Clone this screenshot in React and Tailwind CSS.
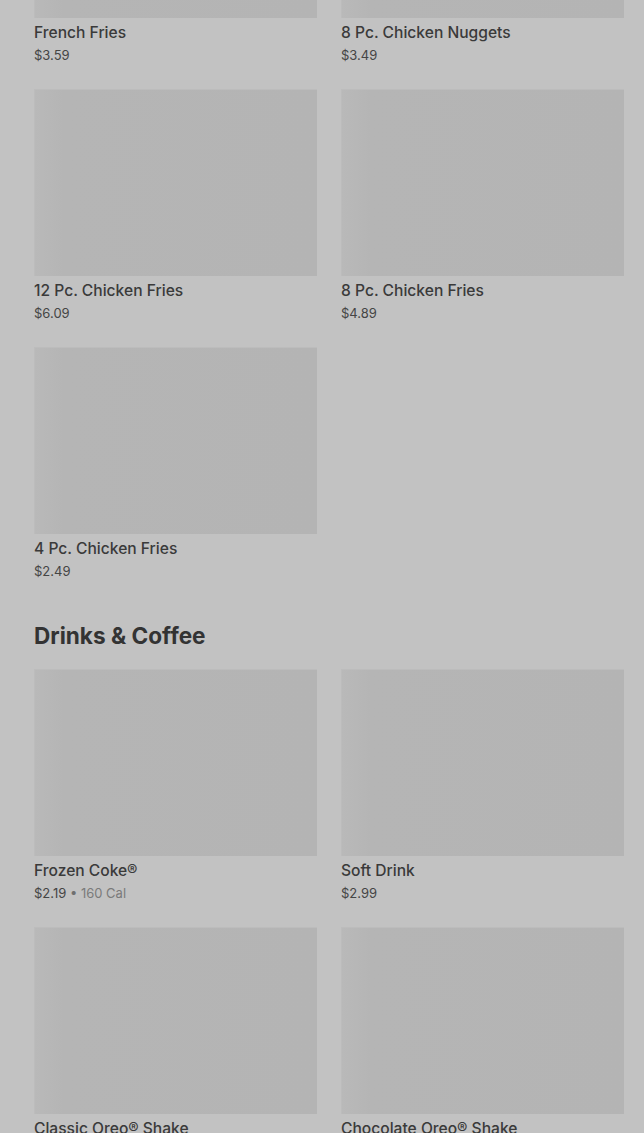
import React from "react";

const fries = [
  { name: "French Fries", price: "$3.59" },
  { name: "8 Pc. Chicken Nuggets", price: "$3.49" },
  { name: "12 Pc. Chicken Fries", price: "$6.09" },
  { name: "8 Pc. Chicken Fries", price: "$4.89" },
  { name: "4 Pc. Chicken Fries", price: "$2.49" },
];

const drinks = [
  { name: "Frozen Coke®", price: "$2.19", cal: "160 Cal" },
  { name: "Soft Drink", price: "$2.99" },
  { name: "Classic Oreo® Shake", price: "$3.99" },
  { name: "Chocolate Oreo® Shake", price: "$3.99" },
];

function Card({ item }) {
  return (
    <div className="flex flex-col">
      <div className="h-[187px] w-full border-t border-l border-[#bcbcbc] bg-[linear-gradient(90deg,#b9b9b9_0%,#b5b5b5_10%,#b4b4b4_100%)]" />
      <div className="mt-[4px] text-[15.6px] leading-[22px] font-medium text-[#3a3a3a]">
        {item.name}
      </div>
      <div className="mt-[2px] text-[13px] leading-[18px] text-[#454545]">
        {item.price}
        {item.cal && (
          <>
            <span className="text-[#6f6f6f]"> • </span>
            <span className="text-[#7a7a7a]">{item.cal}</span>
          </>
        )}
      </div>
    </div>
  );
}

export default function App() {
  return (
    <div
      className="min-h-[1133px] w-full overflow-hidden bg-[#c2c2c2]"
      style={{ fontFamily: "Inter, 'Noto Sans', sans-serif" }}
    >
      <div className="mt-[-169px] pl-[34px] pr-[20px]">
        <div className="grid grid-cols-2 gap-x-6 gap-y-[25px]">
          {fries.map((it) => (
            <Card key={it.name} item={it} />
          ))}
        </div>
        <h2 className="mt-[40px] mb-[17px] text-[22.6px] leading-[32px] font-bold text-[#333333]">
          Drinks &amp; Coffee
        </h2>
        <div className="grid grid-cols-2 gap-x-6 gap-y-[25px]">
          {drinks.map((it) => (
            <Card key={it.name} item={it} />
          ))}
        </div>
      </div>
    </div>
  );
}
